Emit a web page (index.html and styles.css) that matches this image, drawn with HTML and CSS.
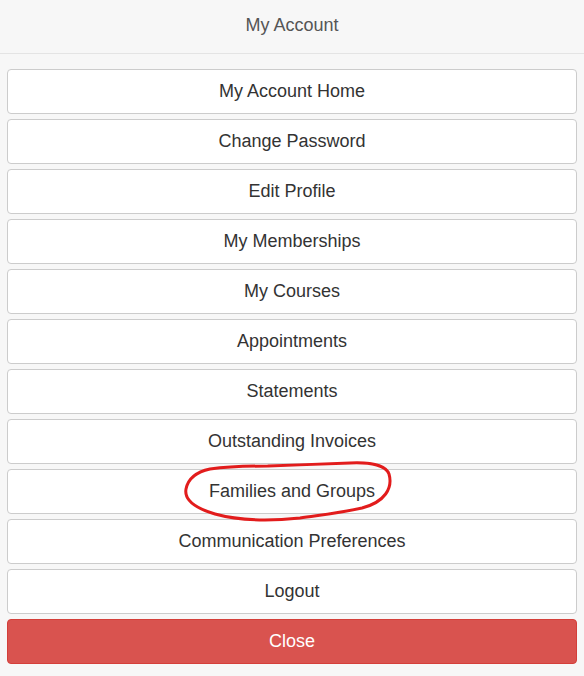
FILE: index.html
```html
<!DOCTYPE html>
<html>
<head>
<meta charset="utf-8">
<link rel="stylesheet" href="styles.css">
</head>
<body>
<div class="panel">
  <div class="header">My Account</div>
  <div class="menu">
    <a class="btn">My Account Home</a>
    <a class="btn">Change Password</a>
    <a class="btn">Edit Profile</a>
    <a class="btn">My Memberships</a>
    <a class="btn">My Courses</a>
    <a class="btn">Appointments</a>
    <a class="btn">Statements</a>
    <a class="btn">Outstanding Invoices</a>
    <a class="btn">Families and Groups</a>
    <a class="btn">Communication Preferences</a>
    <a class="btn">Logout</a>
    <a class="btn btn-close">Close</a>
  </div>
  <svg class="circle" width="584" height="676" viewBox="0 0 584 676">
    <path d="M268 466 C 295 465, 325 464, 350 463 C 372 462, 386 466, 389 474 C 393 488, 385 502, 362 508 C 340 513, 320 515, 300 518 C 270 521, 240 521, 215 514 C 195 508, 184 500, 186 489 C 188 479, 196 472, 210 469 C 225 467, 245 466, 268 466" fill="none" stroke="#e21c1c" stroke-width="3" stroke-linecap="round"/>
  </svg>
</div>
</body>
</html>
```
FILE: styles.css
```css
html, body {
  margin: 0;
  padding: 0;
  background: #f7f7f7;
  font-family: "Liberation Sans", Arial, sans-serif;
}
.panel {
  position: relative;
  width: 584px;
  height: 676px;
}
.header {
  height: 51px;
  border-bottom: 1px solid #e4e4e4;
  display: flex;
  align-items: center;
  justify-content: center;
  font-size: 18px;
  color: #555;
  padding-bottom: 2px;
  box-sizing: content-box;
}
.menu {
  display: flex;
  flex-direction: column;
  gap: 5px;
  padding: 15px 7px 0 7px;
}
.btn {
  display: flex;
  align-items: center;
  justify-content: center;
  height: 45px;
  box-sizing: border-box;
  background: #fff;
  border: 1px solid #ccc;
  border-radius: 4px;
  font-size: 18px;
  color: #333;
}
.btn-close {
  background: #d9534f;
  border-color: #d43f3a;
  color: #fff;
}
.circle {
  position: absolute;
  left: 0;
  top: 0;
  pointer-events: none;
}
```
